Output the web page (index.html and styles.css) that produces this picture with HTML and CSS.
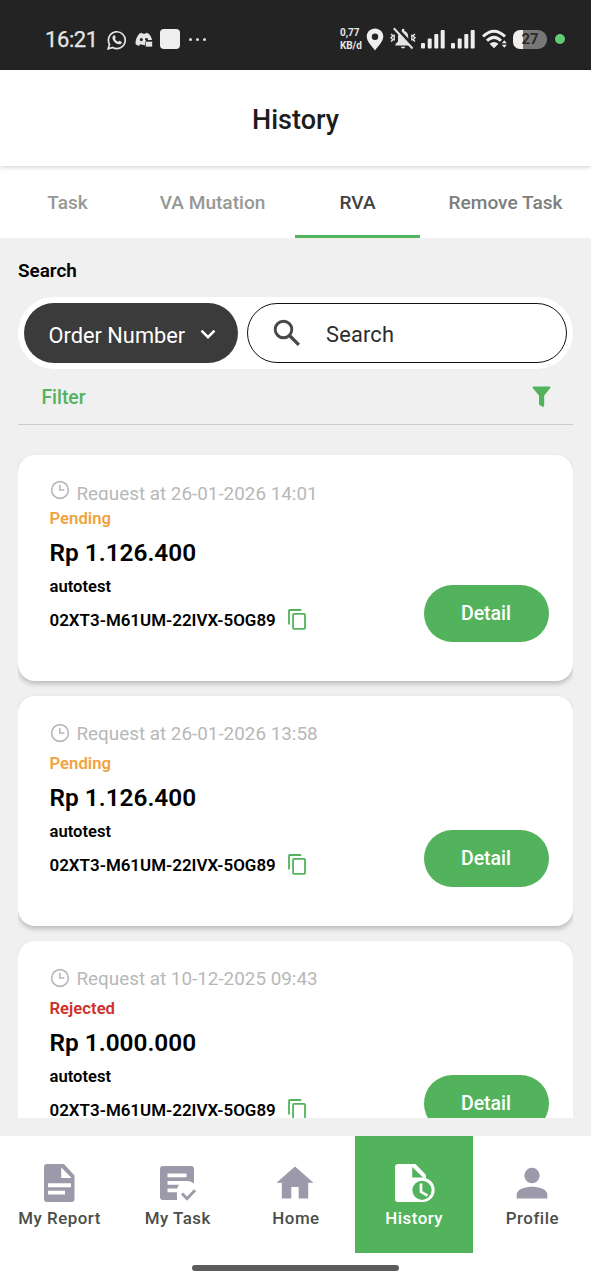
FILE: index.html
```html
<!DOCTYPE html>
<html lang="en">
<head>
<meta charset="utf-8">
<title>History</title>
<link rel="stylesheet" href="styles.css">
</head>
<body>
<svg class="defs" width="0" height="0">
  <symbol id="clock" viewBox="0 0 20 20"><g fill="none" stroke="#b8b8b8" stroke-width="1.6"><circle cx="10" cy="10" r="8.4"/><path d="M9.8 5v5h4.6"/></g></symbol>
  <symbol id="copy" viewBox="0 0 18 21"><g fill="none" stroke="#52b35c" stroke-width="1.8"><path d="M1 15.5V1.7Q1 1 1.7 1H13.2"/><rect x="5.1" y="4.9" width="11.9" height="15" rx=".8"/></g></symbol>
</svg>
<div class="screen">
  <div class="status">
    <div class="status-left">
      <span class="time">16:21</span>
      <svg class="wa" width="20" height="20" viewBox="0 0 20 20"><path d="M1.2 18.8l1.3-4.5A8.4 8.4 0 1 1 5.7 17.500z" fill="none" stroke="#e4e4e4" stroke-width="1.7"/><path d="M6.700 5.400c.5-.4 1-.3 1.300.2l.7 1.600c.1.3 0 .6-.8 1.500.8 1.500 1.900 2.500 3.500 3.200.8-1 1-1.200 1.400-1l1.600.8c.5.200.5.600.3 1.200-.4 1-1.600 1.600-2.700 1.400-3.100-.5-5.900-3.200-6.500-5.900-.2-1.200.2-2.300 1.200-3z" fill="#e4e4e4"/></svg>
      <svg class="discord" width="18" height="16" viewBox="0 0 18 16"><path d="M4.500 1.500L7 .8l.6 1h2.800l.6-1 2.500.7C15.500 3.500 16.800 6 17 8h-6v5.500L5 12.300l-1 1.700C2.300 13.500 1.200 12.800.5 12 .4 8 1.900 4 4.500 1.500z" fill="#e4e4e4"/><ellipse cx="6.300" cy="7.600" rx="1.500" ry="1.700" fill="#232323"/><circle cx="11.500" cy="7.300" r="1.400" fill="#232323"/><rect x="10.500" y="9.300" width="7" height="5.700" rx="1" fill="#e4e4e4" stroke="#232323" stroke-width=".7"/></svg>
      <span class="square"></span>
      <span class="dots"><i></i><i></i><i></i></span>
    </div>
    <div class="status-right">
      <div class="speed"><span>0,77</span><span>KB/d</span></div>
      <svg class="pin" width="18" height="23" viewBox="0 0 18 23"><path fill-rule="evenodd" d="M9 .5c4.700 0 8.300 3.600 8.300 8.100C17.300 13.500 12 18.500 9 22.500 6 18.500.7 13.500.7 8.600.7 4.100 4.300.5 9 .5zm0 5a3.200 3.200 0 1 0 0 6.400 3.200 3.200 0 0 0 0-6.400z" fill="#eee"/></svg>
      <svg class="bell" width="26" height="23" viewBox="0 0 26 23"><path d="M5.500 18.500v-1.500L8 14.500V9.500C8 6.500 9.500 4.700 11.800 4V3a1.300 1.300 0 0 1 2.600 0v1c2.400.7 3.800 2.600 3.800 5.500v5l2.500 2.500v1.500zM10.800 19.700h4.500a2.300 2.300 0 0 1-4.500 0z" fill="#e4e4e4"/><path d="M5.500 0L25 21" stroke="#232323" stroke-width="3"/><path d="M3.800 1.200L22.500 21.500" stroke="#e4e4e4" stroke-width="2"/><path d="M1 7l2 1.700-2 2 2 2L1 14.500M4.200 7.500v6M25 7l-2 1.700 2 2-2 2 2 1.800M21.800 7.500v6" fill="none" stroke="#e4e4e4" stroke-width="1.400"/></svg>
      <svg class="signal" width="24" height="20" viewBox="0 0 24 20"><g fill="#eee"><rect x="0" y="14" width="4" height="5.500" rx="1"/><rect x="6.700" y="9.500" width="4" height="10" rx="1"/><rect x="13.300" y="5" width="4" height="14.500" rx="1"/><rect x="19.700" y="1" width="4" height="18.500" rx="1"/></g></svg>
      <svg class="signal second" width="24" height="20" viewBox="0 0 24 20"><g fill="#eee"><rect x="0" y="14" width="4" height="5.500" rx="1"/><rect x="6.700" y="9.500" width="4" height="10" rx="1"/><rect x="13.300" y="5" width="4" height="14.500" rx="1"/><rect x="19.700" y="1" width="4" height="18.500" rx="1"/></g></svg>
      <svg class="wifi" width="26" height="20" viewBox="0 0 26 20"><g fill="none" stroke="#eee" stroke-width="2.900"><path d="M1 7.500Q12 -3 23 7.500"/><path d="M5 11.700Q12 5 19 11.700"/></g><path d="M7.500 14.800q4.500-3.700 9 0L12 19.300z" fill="#eee"/><path d="M19.800 14.200l2.500-3 2.500 3zM19.800 15.800l2.500 3 2.500-3z" fill="#eee"/></svg>
      <div class="battery"><span>27</span></div>
      <span class="live"></span>
    </div>
  </div>

  <header class="header"><h1>History</h1></header>

  <nav class="tabs">
    <span class="tab">Task</span>
    <span class="tab">VA Mutation</span>
    <span class="tab active">RVA</span>
    <span class="tab next">Remove Task</span>
  </nav>

  <main class="content">
    <div class="label">Search</div>
    <div class="searchbar">
      <div class="select"><span>Order Number</span>
        <svg width="16" height="11" viewBox="0 0 16 11"><path d="M1.500 1.700L8 8.200l6.500-6.500" fill="none" stroke="#fff" stroke-width="2.500"/></svg>
      </div>
      <div class="field">
        <svg width="28" height="28" viewBox="0 0 28 28"><circle cx="10.500" cy="10.500" r="8.300" fill="none" stroke="#464946" stroke-width="2.900"/><path d="M16.500 16.500l9.300 9.300" stroke="#464946" stroke-width="3.300"/></svg>
        <span>Search</span>
      </div>
    </div>
    <div class="filter"><span>Filter</span>
      <svg width="19" height="22" viewBox="0 0 19 22"><path d="M1.200.5h16.600q1 .3.500 1.500L12.200 9.500v10.300q-.2 1.600-1.800 1L7.700 19q-.7-.5-.7-1.500v-8L.7 2Q.2.800 1.200.5z" fill="#52b35c"/></svg>
    </div>

    <div class="list">
      <article class="card clipped">
        <div class="request"><svg width="20" height="20"><use href="#clock"/></svg><span>Request at 26-01-2026 14:01</span></div>
        <div class="state pending">Pending</div>
        <div class="amount">Rp 1.126.400</div>
        <div class="bottom">
          <div><div class="name">autotest</div><div class="code"><span>02XT3-M61UM-22IVX-5OG89</span><svg width="18" height="21"><use href="#copy"/></svg></div></div>
          <div class="detail">Detail</div>
        </div>
      </article>
      <article class="card">
        <div class="request"><svg width="20" height="20"><use href="#clock"/></svg><span>Request at 26-01-2026 13:58</span></div>
        <div class="state pending">Pending</div>
        <div class="amount">Rp 1.126.400</div>
        <div class="bottom">
          <div><div class="name">autotest</div><div class="code"><span>02XT3-M61UM-22IVX-5OG89</span><svg width="18" height="21"><use href="#copy"/></svg></div></div>
          <div class="detail">Detail</div>
        </div>
      </article>
      <article class="card">
        <div class="request"><svg width="20" height="20"><use href="#clock"/></svg><span>Request at 10-12-2025 09:43</span></div>
        <div class="state rejected">Rejected</div>
        <div class="amount">Rp 1.000.000</div>
        <div class="bottom">
          <div><div class="name">autotest</div><div class="code"><span>02XT3-M61UM-22IVX-5OG89</span><svg width="18" height="21"><use href="#copy"/></svg></div></div>
          <div class="detail">Detail</div>
        </div>
      </article>
    </div>
  </main>

  <footer class="nav">
    <div class="item"><svg width="42" height="42" viewBox="0 0 42 42"><path fill-rule="evenodd" d="M9 2h17l10.500 11.500V37q0 3-3 3H9q-3 0-3-3V5q0-3 3-3zm14.200 3.200V16H33.500zM10 21.300v3.900h23v-3.900zM10 28.700v3.900h17v-3.900z" fill="#9c9aaa"/></svg><span>My Report</span></div>
    <div class="item"><svg width="42" height="42" viewBox="0 0 42 42"><path d="M7 4h28q3 0 3 3v31H7q-3 0-3-3V7q0-3 3-3z" fill="#9c9aaa"/><path d="M11.500 11.500h19v3.700h-19zM11.500 19h19v3.700h-19zM11.500 26.500h10v3.700h-10z" fill="#fff"/><path d="M21 39v-4a10 10 0 0 1 0-3.500A10.500 10.500 0 0 1 38.500 22V39z" fill="#fff"/><path d="M26 31.500l5 5.200 8-8.400" fill="none" stroke="#9c9aaa" stroke-width="2.900"/></svg><span>My Task</span></div>
    <div class="item"><svg width="42" height="42" viewBox="0 0 42 42"><path d="M21 4.500L39.500 20.800H34.200V36.500H24.700V25H17.300V36.500H7.800V20.800H2.500z" fill="#9c9aaa"/></svg><span>Home</span></div>
    <div class="item current"><svg width="42" height="42" viewBox="0 0 42 42"><path fill-rule="evenodd" d="M5 2h17.500L33 13v3.300A12.300 12.300 0 0 1 36.500 38Q34 40 30 40H5q-3 0-3-3V5q0-3 3-3zm14.200 3V15.500H30z" fill="#fff"/><circle cx="29" cy="28.300" r="9.600" fill="#52b35c"/><path d="M28 21.500v8.300l6.500 3.800" fill="none" stroke="#fff" stroke-width="2.700"/></svg><span>History</span></div>
    <div class="item"><svg width="42" height="42" viewBox="0 0 42 42"><circle cx="21" cy="13.500" r="7.700" fill="#9c9aaa"/><path d="M5.700 36.500v-4C5.700 27 15 24.800 21 24.800s15.300 2.200 15.300 7.700v4z" fill="#9c9aaa"/></svg><span>Profile</span></div>
  </footer>
  <div class="gesture"><span></span></div>
</div>
</body>
</html>
```
FILE: styles.css
```css
* { box-sizing: border-box; }
body { margin: 0; font-family: Roboto, "Liberation Sans", sans-serif; background: #fff; color: #000; }
svg { display: block; flex: none; }
.defs { display: none; }
.screen { width: 591px; height: 1280px; display: flex; flex-direction: column; overflow: hidden; }
.screen > * { flex: none; }

.status { height: 70px; background: #232323; display: flex; justify-content: space-between; padding: 9px 26px 0 45px; color: #e6e6e6; }
.status-left, .status-right { display: flex; align-items: center; height: 60px; }
.time { font-size: 22px; letter-spacing: -.4px; width: 62px; line-height: 60px; padding-top: 2px; -webkit-text-stroke: .25px #e6e6e6; }
.wa { margin-top: 1px; }
.discord { margin-left: 8px; margin-top: 2px; }
.square { width: 20px; height: 20px; border-radius: 4px; background: #eee; margin-left: 7px; }
.dots { display: flex; gap: 4px; margin-left: 9px; }
.dots i { width: 3px; height: 3px; border-radius: 50%; background: #ddd; }
.speed { display: flex; flex-direction: column; font-size: 10px; font-weight: 700; line-height: 13px; width: 26px; letter-spacing: -.1px; padding-left: 1px; }
.pin { margin-left: 1px; }
.bell { margin-left: 6px; margin-top: -2px; }
.signal { margin-left: 5px; }
.signal.second { margin-left: 6px; }
.wifi { margin-left: 7px; }
.battery { width: 34px; height: 19px; border-radius: 7px 9px 9px 7px; margin-left: 5px; background: linear-gradient(90deg, #eee 10px, #777 10px); color: #2c2c2c; font-size: 15px; font-weight: 700; line-height: 19px; text-align: center; }
.live { width: 10px; height: 10px; border-radius: 50%; background: #62cc72; margin-left: 8px; }

.header { height: 96px; display: flex; align-items: center; justify-content: center; background: #fff; box-shadow: 0 1px 5px rgba(0,0,0,.2); position: relative; z-index: 1; }
h1 { margin: 3px 0 0; font-size: 27px; font-weight: 500; color: #1c1c1c; }

.tabs { height: 72px; display: grid; grid-template-columns: 135px 155px 5px 125px 171px; background: #fff; }
.tab { display: flex; align-items: center; justify-content: center; font-size: 19.100px; font-weight: 500; color: #969896; border-bottom: 3px solid transparent; padding-top: 4px; white-space: nowrap; }
.tab.active { grid-column: 4; color: #414341; border-color: #52b35c; }
.tab.next { color: #7c7e7c; }

.content { height: 898px; background: #f0f0f0; padding: 20px 18px 18px; display: flex; flex-direction: column; }
.content > * { flex: none; }
.label { font-size: 18.900px; font-weight: 600; line-height: 25px; height: 39px; }
.searchbar { height: 72px; border-radius: 36px; background: #fff; padding: 6px; display: flex; gap: 9px; }
.select { width: 214px; border-radius: 30px; background: #3b3b3b; color: #fff; display: flex; align-items: center; justify-content: space-between; padding: 2px 22px 0 24.500px; font-size: 21.8px; }
.field { flex: 1; border: 1.5px solid #111; border-radius: 30px; display: flex; align-items: center; gap: 25px; padding-left: 25px; font-size: 21.8px; letter-spacing: .2px; color: #2c2c2c; }
.select span, .field span { padding-top: 2px; }
.filter { height: 56px; border-bottom: 1.5px solid #ccc; display: flex; justify-content: space-between; padding: 16px 22px 0 23.500px; color: #52b35c; font-size: 19.300px; font-weight: 500; line-height: 25px; }
.filter svg { margin-top: 1px; }

.list { height: 693px; padding-top: 30px; overflow: hidden; display: flex; flex-direction: column; gap: 15px; }
.card { flex: none; height: 230px; border-radius: 17px; background: #fff; padding: 25px 24.500px 0 31.500px; box-shadow: 0 3px 5px rgba(0,0,0,.22); }
.card.clipped { height: 226px; }
.request { height: 28px; display: flex; gap: 7px; color: #b8b8b8; font-size: 18.850px; line-height: 26px; white-space: nowrap; }
.request svg { margin: 2px 0 0; }
.clipped .request { height: 20px; overflow: hidden; margin-bottom: 4px; }
.clipped .request svg { margin-top: 0; }
.clipped .request span { padding-top: 1px; }
.state { height: 30px; line-height: 30px; font-size: 16.700px; font-weight: 600; }
.pending { color: #efa33f; }
.rejected { color: #cc3029; }
.amount { height: 38px; line-height: 37px; font-size: 24.400px; font-weight: 600; }
.bottom { display: flex; justify-content: space-between; }
.name { height: 30px; line-height: 30px; font-size: 16.600px; font-weight: 600; }
.code { height: 35px; display: flex; align-items: center; gap: 12px; font-size: 16.950px; font-weight: 600; }
.code svg { margin-top: -1px; }
.detail { width: 125px; height: 57px; margin-top: 13px; border-radius: 29px; background: #52b35c; color: #fff; font-size: 19.500px; font-weight: 500; line-height: 57px; text-align: center; }

.nav { height: 117px; display: grid; grid-template-columns: repeat(5, 1fr); background: #fff; }
.item { display: flex; flex-direction: column; align-items: center; padding-top: 26px; font-size: 16.900px; font-weight: 500; letter-spacing: .5px; line-height: 29px; color: #4a4e48; white-space: nowrap; }
.item span { padding-left: 1px; }
.item.current { background: #52b35c; color: #fff; }
.gesture { height: 27px; display: flex; justify-content: center; padding-top: 12px; }
.gesture span { width: 207px; height: 6px; border-radius: 3px; background: #5c5c5c; }
```
